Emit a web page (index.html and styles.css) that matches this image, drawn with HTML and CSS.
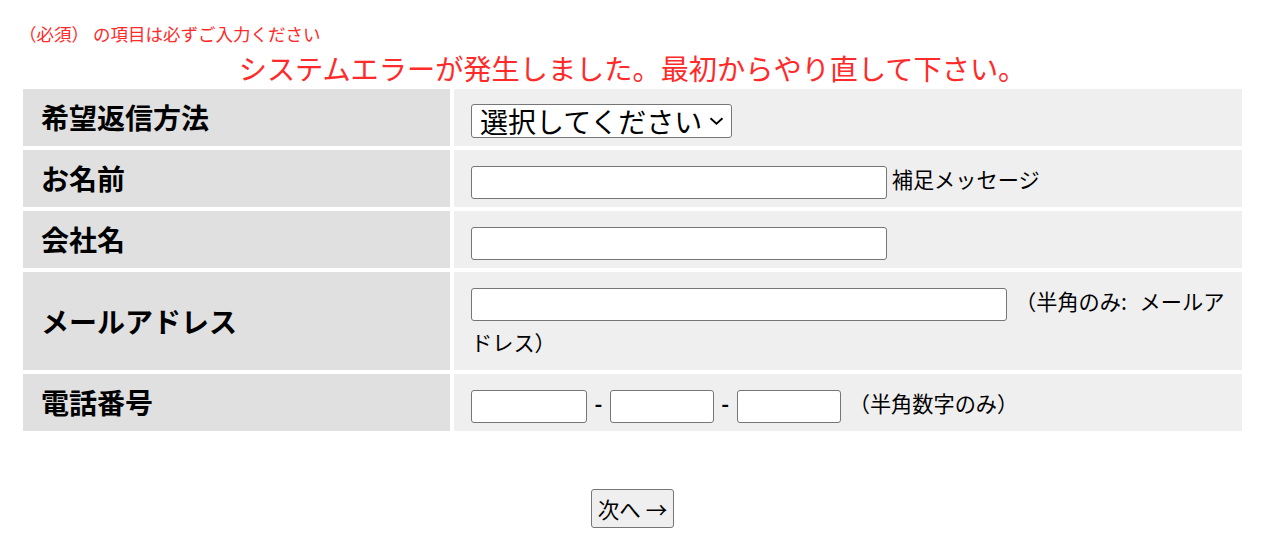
FILE: index.html
```html
<!DOCTYPE html>
<html lang="ja">
<head>
<meta charset="utf-8">
<title>お問い合わせ</title>
<link rel="stylesheet" href="styles.css">
</head>
<body>
<form class="contact">
  <p class="note">（必須） の項目は必ずご入力ください</p>
  <p class="error">システムエラーが発生しました。最初からやり直して下さい。</p>
  <table class="fields">
    <tr>
      <th>希望返信方法</th>
      <td>
        <span class="select-wrap">
          <select class="method"><option>選択してください</option></select>
          <svg class="chevron" width="15" height="8" viewBox="0 0 15 8" aria-hidden="true"><path d="M1.5 1.2 L7.5 6.6 L13.5 1.2" fill="none" stroke="#000" stroke-width="1.9"/></svg>
        </span>
      </td>
    </tr>
    <tr>
      <th>お名前</th>
      <td><input type="text" class="w-name"> 補足メッセージ</td>
    </tr>
    <tr>
      <th>会社名</th>
      <td><input type="text" class="w-name"></td>
    </tr>
    <tr>
      <th>メールアドレス</th>
      <td><input type="text" class="w-mail"><span class="hint lead">（半角のみ:</span> メールアドレス）</td>
    </tr>
    <tr>
      <th>電話番号</th>
      <td><input type="text" class="w-tel1"><span class="dash">-</span><input type="text" class="w-tel"><span class="dash">-</span><input type="text" class="w-tel"><span class="hint">（半角数字のみ）</span></td>
    </tr>
  </table>
  <div class="actions"><button type="button" class="next">次へ →</button></div>
</form>
</body>
</html>
```

FILE: styles.css
```css
html, body {
  margin: 0;
  padding: 0;
  background: #fff;
}

body {
  font-family: "Noto Sans CJK JP", "Noto Sans", sans-serif;
  color: #000;
}

.contact {
  padding: 24px 15px 0 19px;
}

.note {
  margin: 0;
  font-size: 17.5px;
  line-height: 20px;
  color: #ff2a2a;
}

.error {
  margin: 7px 0 0;
  font-size: 28.2px;
  line-height: 34px;
  color: #ff2a2a;
  text-align: center;
}

.fields {
  width: 1227px;
  border-spacing: 4px;
  border-collapse: separate;
}

.fields th {
  width: 391px;
  padding: 8px 18px;
  background: #e0e0e0;
  text-align: left;
  font-size: 28px;
  font-weight: bold;
  line-height: 41px;
  vertical-align: middle;
}

.fields td {
  padding: 8px 8px 8px 17px;
  background: #efefef;
  font-size: 21.2px;
  line-height: 41px;
  vertical-align: middle;
}

.fields input {
  box-sizing: border-box;
  height: 33px;
  margin: 0;
  padding: 1px 4px;
  border: 1px solid #767676;
  border-radius: 3px;
  background: #fff;
  font-size: 16px;
  vertical-align: middle;
}

.w-name { width: 416px; }
.w-mail { width: 536px; }
.w-tel1 { width: 116px; }
.w-tel { width: 104px; }

.dash {
  margin: 0 7.5px;
  font-weight: bold;
}

.hint {
  margin-left: 8px;
}

/* wider gap after the colon, before the wrapped remainder */
.hint.lead {
  margin-right: 8px;
}

.select-wrap {
  position: relative;
  display: inline-block;
  vertical-align: middle;
}

.method {
  -webkit-appearance: none;
  appearance: none;
  box-sizing: border-box;
  display: block;
  width: 261px;
  height: 34px;
  margin: 0;
  padding: 0 30px 0 8px;
  border: 1px solid #767676;
  border-radius: 3px;
  background: #fff;
  font-family: "Noto Sans CJK JP", sans-serif;
  font-size: 28px;
  line-height: 32px;
  color: #000;
}

.chevron {
  position: absolute;
  right: 8px;
  top: 13px;
  pointer-events: none;
}

.actions {
  margin-top: 54px;
  text-align: center;
}

.next {
  box-sizing: border-box;
  width: 83px;
  height: 39px;
  padding: 0 4px;
  border: 1px solid #767676;
  border-radius: 3px;
  background: #efefef;
  font-family: "Noto Sans CJK JP", sans-serif;
  font-size: 21.5px;
  color: #000;
}
```
